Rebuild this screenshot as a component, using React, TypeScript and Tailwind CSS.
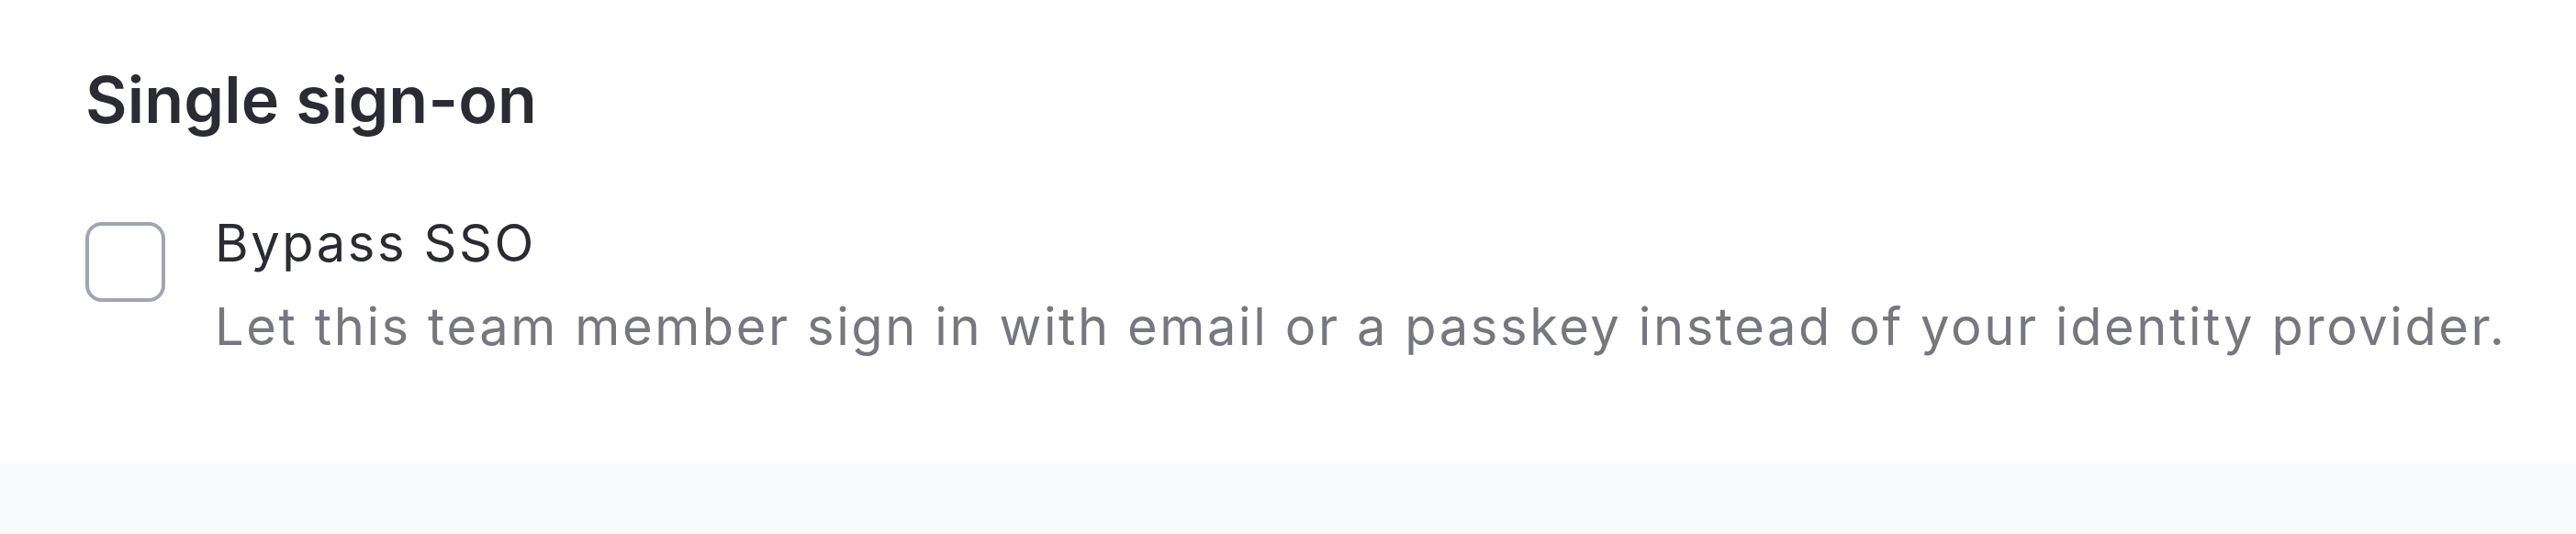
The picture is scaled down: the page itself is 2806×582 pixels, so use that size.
export default function App() {
  return (
    <div className="min-h-[582px] w-full bg-white font-['Inter',sans-serif]">
      <section className="h-[505px] pl-[93px] pr-[40px] pt-[60px]">
        <h2 className="text-[70px] font-semibold leading-[98px] tracking-[0.2px] text-[#2a2b33]">
          Single sign-on
        </h2>

        <label className="mt-[62px] flex items-start gap-[54px]">
          <input
            type="checkbox"
            className="mt-[22px] h-[87px] w-[87px] shrink-0 appearance-none rounded-[18px] border-[4px] border-[#9fa6b3] bg-white"
          />
          <span className="flex flex-col whitespace-nowrap tracking-[2.6px]">
            <span className="text-[56px] leading-[91px] text-[#2a2b33]">Bypass SSO</span>
            <span className="text-[56px] leading-[91px] text-[#76777f]">
              Let this team member sign in with email or a passkey instead of your identity provider.
            </span>
          </span>
        </label>
      </section>

      <div className="h-[77px] bg-[#f9fafb]" />
    </div>
  );
}
